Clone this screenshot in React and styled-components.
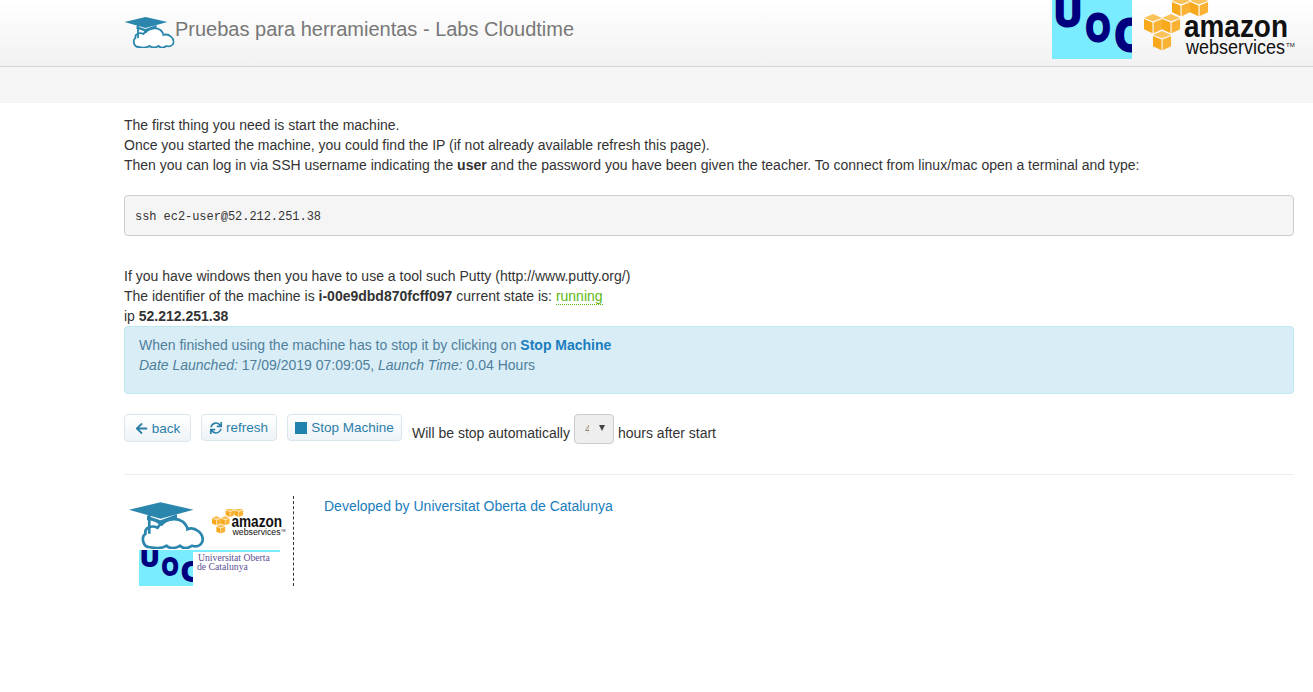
import React from 'react';
import styled, { createGlobalStyle } from 'styled-components';
import { FaArrowLeft, FaSync } from 'react-icons/fa';

const GlobalStyle = createGlobalStyle`
  html, body {
    margin: 0;
    padding: 0;
    background: #fff;
    font-family: 'Liberation Sans', Arial, sans-serif;
    font-size: 14px;
    line-height: 20px;
    color: #333;
  }
`;

const Header = styled.header`
  height: 66px;
  display: flex;
  justify-content: space-between;
  padding-left: 124px;
  background: linear-gradient(to bottom, #fff 0%, #f2f2f2 100%);
  border-bottom: 1px solid #d5d5d5;
  overflow: hidden;
`;

const Brand = styled.div`
  display: flex;
  align-items: flex-start;
  padding-top: 15px;
`;

const BrandTitle = styled.div`
  font-size: 20px;
  line-height: 28px;
  color: #777;
`;

const HeaderLogos = styled.div`
  display: flex;
  align-items: flex-start;
  gap: 12px;
  padding-right: 17px;
`;

const SubBar = styled.div`
  height: 36px;
  background: #f5f5f5;
`;

const Main = styled.main`
  padding: 12px 19px 0 124px;
`;

const Code = styled.pre`
  margin: 20px 0 30px;
  padding: 11px 10px 9px;
  height: 41px;
  box-sizing: border-box;
  background: #f5f5f5;
  border: 1px solid #ccc;
  border-radius: 4px;
  font-family: 'Liberation Mono', monospace;
  font-size: 12px;
  line-height: 20px;
  letter-spacing: -0.05px;
  color: #333;
`;

const State = styled.span`
  color: #5cb811;
  border-bottom: 1px dotted #5cb811;
`;

const Alert = styled.div`
  height: 68px;
  box-sizing: border-box;
  padding: 8px 14px;
  background: #d9edf7;
  border: 1px solid #bce8f1;
  border-radius: 4px;
  color: #4f7f9b;
`;

const AlertLink = styled.a`
  font-weight: bold;
  color: #1a7dbd;
`;

const Actions = styled.div`
  display: flex;
  align-items: flex-start;
  margin-top: 20px;
`;

const ActionButton = styled.button`
  display: flex;
  align-items: center;
  justify-content: center;
  gap: ${(p) => p.$gap}px;
  width: ${(p) => p.$width}px;
  height: ${(p) => p.$height}px;
  margin-right: 10px;
  padding: 0;
  background: linear-gradient(to bottom, #fff 0%, #eef3f7 100%);
  border: 1px solid #dbe5ec;
  border-radius: 4px;
  font-family: inherit;
  font-size: 13.5px;
  color: #2a7fa8;
`;

const StopSquare = styled.span`
  width: 12px;
  height: 12px;
  background: #2183ad;
`;

const AutoText = styled.span`
  margin-top: 9px;
`;

const FakeSelect = styled.div`
  position: relative;
  width: 40px;
  height: 30px;
  box-sizing: border-box;
  margin: 0 4px;
  overflow: hidden;
  background: #eee;
  border: 1px solid #ccc;
  border-radius: 4px;

  &::after {
    content: '';
    position: absolute;
    top: 10px;
    right: 8px;
    border-left: 3.5px solid transparent;
    border-right: 3.5px solid transparent;
    border-top: 6px solid #444;
  }
`;

const SelectValue = styled.span`
  display: block;
  width: 4px;
  margin-left: 10px;
  overflow: hidden;
  font-size: 11px;
  line-height: 28px;
  color: #888;
`;

const Rule = styled.hr`
  margin: 30px 0 21px;
  border: 0;
  border-top: 1px solid #eee;
`;

const Footer = styled.footer`
  display: flex;
  align-items: flex-start;
  gap: 30px;
`;

const FooterLogo = styled.div`
  width: 169px;
  height: 90px;
  border-right: 1px dashed #333;
`;

const FooterLink = styled.a`
  color: #1a7dbd;
`;

const HAT = '#2a86ad';

function HatCloud({ width, height, x, y }) {
  return (
    <svg x={x} y={y} width={width} height={height} viewBox="0 0 50 33">
      <path
        d="M14 32 C9 32 8 25 11 23 C10 19 15 17 19 19 C22 14 30 11 36 15 C38 17 39 18 39 20 C44 18 50 23 49 28 C48 31 45 32 42 31 C39 33 36 33 34 31 C31 33 27 33 25 31 C22 33 19 33 14 32 Z"
        fill="#fff"
        stroke={HAT}
        strokeWidth="1.8"
      />
      <path d="M0 7 L21 2 L43 7 L21 13 Z" fill={HAT} />
      <path d="M12 11 L21 14 L32 10 L32 14 C28 14 24 15 22 18 C18 15 15 14 12 14 Z" fill={HAT} />
      <path d="M13.5 8 L13.5 23" stroke={HAT} strokeWidth="1.8" />
    </svg>
  );
}

function UocMark({ width, height, x, y }) {
  const ink = '#00007f';
  return (
    <svg x={x} y={y} width={width} height={height} viewBox="0 0 80 59" preserveAspectRatio="none">
      <rect width="80" height="59" fill="#7aecff" />
      <g
        fontFamily="'Liberation Sans', Arial, sans-serif"
        fontWeight="bold"
        fontSize="38"
        fill={ink}
        stroke={ink}
        strokeWidth="3"
      >
        <text x="3" y="26" textLength="26" lengthAdjust="spacingAndGlyphs">U</text>
        <text x="34" y="41" textLength="24" lengthAdjust="spacingAndGlyphs">O</text>
        <text x="63" y="51" fontSize="46" textLength="30" lengthAdjust="spacingAndGlyphs">C</text>
      </g>
    </svg>
  );
}

function Cube({ x, y }) {
  return (
    <g transform={`translate(${x} ${y}) scale(1.13)`}>
      <path d="M0 3.5 L8 0 L16 3.5 L8 6.5 Z" fill="#fbc25a" />
      <path d="M0 4.5 L7.5 7.5 L7.5 17 L0 13.5 Z" fill="#f7a81b" />
      <path d="M16 4.5 L8.5 7.5 L8.5 17 L16 13.5 Z" fill="#f9b233" />
    </g>
  );
}

function AwsMark({ width, height, x, y }) {
  return (
    <svg x={x} y={y} width={width} height={height} viewBox="0 0 152 59">
      <Cube x="0" y="14" />
      <Cube x="18" y="14" />
      <Cube x="9" y="31" />
      <Cube x="28" y="-3" />
      <Cube x="46" y="-3" />
      <g fontFamily="'Liberation Sans', Arial, sans-serif" fill="#111">
        <text x="40" y="37" fontSize="32" fontWeight="bold" textLength="104" lengthAdjust="spacingAndGlyphs">amazon</text>
        <text x="42" y="54" fontSize="20" textLength="99" lengthAdjust="spacingAndGlyphs">webservices</text>
        <text x="142" y="47" fontSize="6">TM</text>
      </g>
    </svg>
  );
}

function FooterMark() {
  return (
    <svg width="169" height="90" viewBox="0 0 169 90">
      <HatCloud x="5" y="3" width="75" height="50" />
      <AwsMark x="88" y="13" width="74" height="29" />
      <UocMark x="15" y="54" width="54" height="36" />
      <rect x="69" y="54" width="87" height="2" fill="#7aecff" />
      <g fontFamily="'Liberation Serif', serif" fontSize="9.7" fill="#5b4f93">
        <text x="74" y="65">Universitat Oberta</text>
        <text x="73" y="74">de Catalunya</text>
      </g>
    </svg>
  );
}

export default function App() {
  return (
    <>
      <GlobalStyle />
      <Header>
        <Brand>
          <svg width="51" height="33" viewBox="0 0 50 33">
            <HatCloud width="50" height="33" />
          </svg>
          <BrandTitle>Pruebas para herramientas - Labs Cloudtime</BrandTitle>
        </Brand>
        <HeaderLogos>
          <svg width="80" height="59">
            <UocMark width="80" height="59" />
          </svg>
          <svg width="152" height="59">
            <AwsMark width="152" height="59" />
          </svg>
        </HeaderLogos>
      </Header>
      <SubBar />
      <Main>
        <div>The first thing you need is start the machine.</div>
        <div>Once you started the machine, you could find the IP (if not already available refresh this page).</div>
        <div>
          Then you can log in via SSH username indicating the <b>user</b> and the password you have been given the teacher. To connect from linux/mac open a terminal and type:
        </div>
        <Code>ssh ec2-user@52.212.251.38</Code>
        <div>If you have windows then you have to use a tool such Putty (http://www.putty.org/)</div>
        <div>
          The identifier of the machine is <b>i-00e9dbd870fcff097</b> current state is: <State>running</State>
        </div>
        <div>
          ip <b>52.212.251.38</b>
        </div>
        <Alert>
          <div>
            When finished using the machine has to stop it by clicking on <AlertLink>Stop Machine</AlertLink>
          </div>
          <div>
            <i>Date Launched:</i> 17/09/2019 07:09:05, <i>Launch Time:</i> 0.04 Hours
          </div>
        </Alert>
        <Actions>
          <ActionButton $width={67} $height={28} $gap={4}>
            <FaArrowLeft size={13} />
            back
          </ActionButton>
          <ActionButton $width={76} $height={27} $gap={4}>
            <FaSync size={12} />
            refresh
          </ActionButton>
          <ActionButton $width={115} $height={27} $gap={4}>
            <StopSquare />
            Stop Machine
          </ActionButton>
          <AutoText>Will be stop automatically</AutoText>
          <FakeSelect>
            <SelectValue>4</SelectValue>
          </FakeSelect>
          <AutoText>hours after start</AutoText>
        </Actions>
        <Rule />
        <Footer>
          <FooterLogo>
            <FooterMark />
          </FooterLogo>
          <FooterLink>Developed by Universitat Oberta de Catalunya</FooterLink>
        </Footer>
      </Main>
    </>
  );
}
